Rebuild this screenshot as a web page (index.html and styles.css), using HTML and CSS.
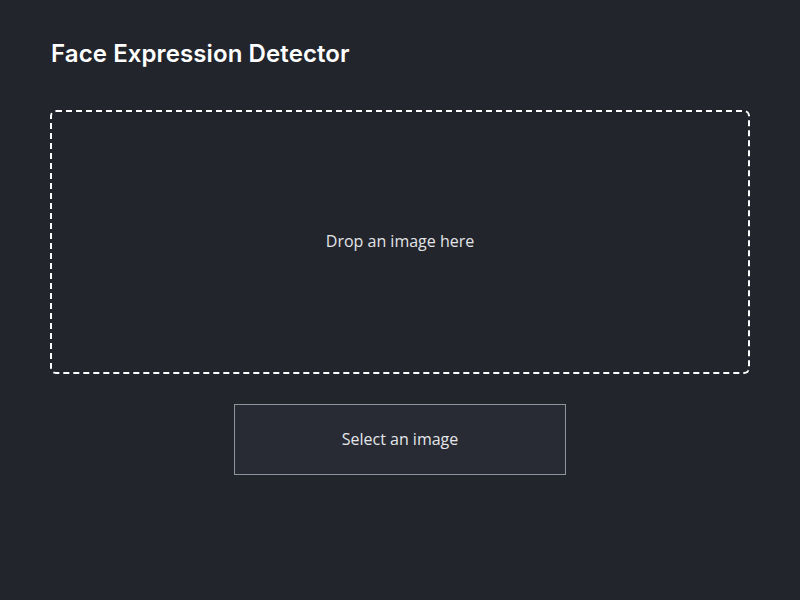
FILE: index.html
```html
<!DOCTYPE html>
<html>
<head>
<meta charset="utf-8">
<link rel="stylesheet" href="styles.css">
</head>
<body>
<main class="app">
  <h1 class="title">Face Expression Detector</h1>
  <div class="dropzone">
    <span class="drop-text">Drop an image here</span>
  </div>
  <div class="actions">
    <button class="select-btn">Select an image</button>
  </div>
</main>
</body>
</html>
```
FILE: styles.css
```css
html, body {
  margin: 0;
  padding: 0;
  background: #22252c;
  height: 100%;
}
.app {
  padding: 38px 50px 0 50px;
  font-family: "Open Sans", "Lato", sans-serif;
  color: #e4e6ea;
}
.title {
  margin: 0 0 40px 1px;
  font-family: "Inter", "Open Sans", sans-serif;
  font-weight: 600;
  font-size: 24px;
  line-height: 32px;
  color: #ffffff;
  letter-spacing: 0.1px;
}
.dropzone {
  height: 260px;
  border: 2px dashed #ffffff;
  border-radius: 6px;
  display: flex;
  align-items: center;
  justify-content: center;
}
.drop-text {
  font-size: 16px;
  line-height: 20px;
  color: #e2e4e8;
  margin-top: -2px;
}
.actions {
  display: flex;
  justify-content: center;
  margin-top: 30px;
}
.select-btn {
  width: 332px;
  height: 71px;
  background: #282b33;
  border: 1px solid #8e949e;
  color: #e4e6ea;
  font-family: "Open Sans", "Lato", sans-serif;
  font-size: 16px;
  line-height: 20px;
  padding: 0 0 2px 0;
}
```
